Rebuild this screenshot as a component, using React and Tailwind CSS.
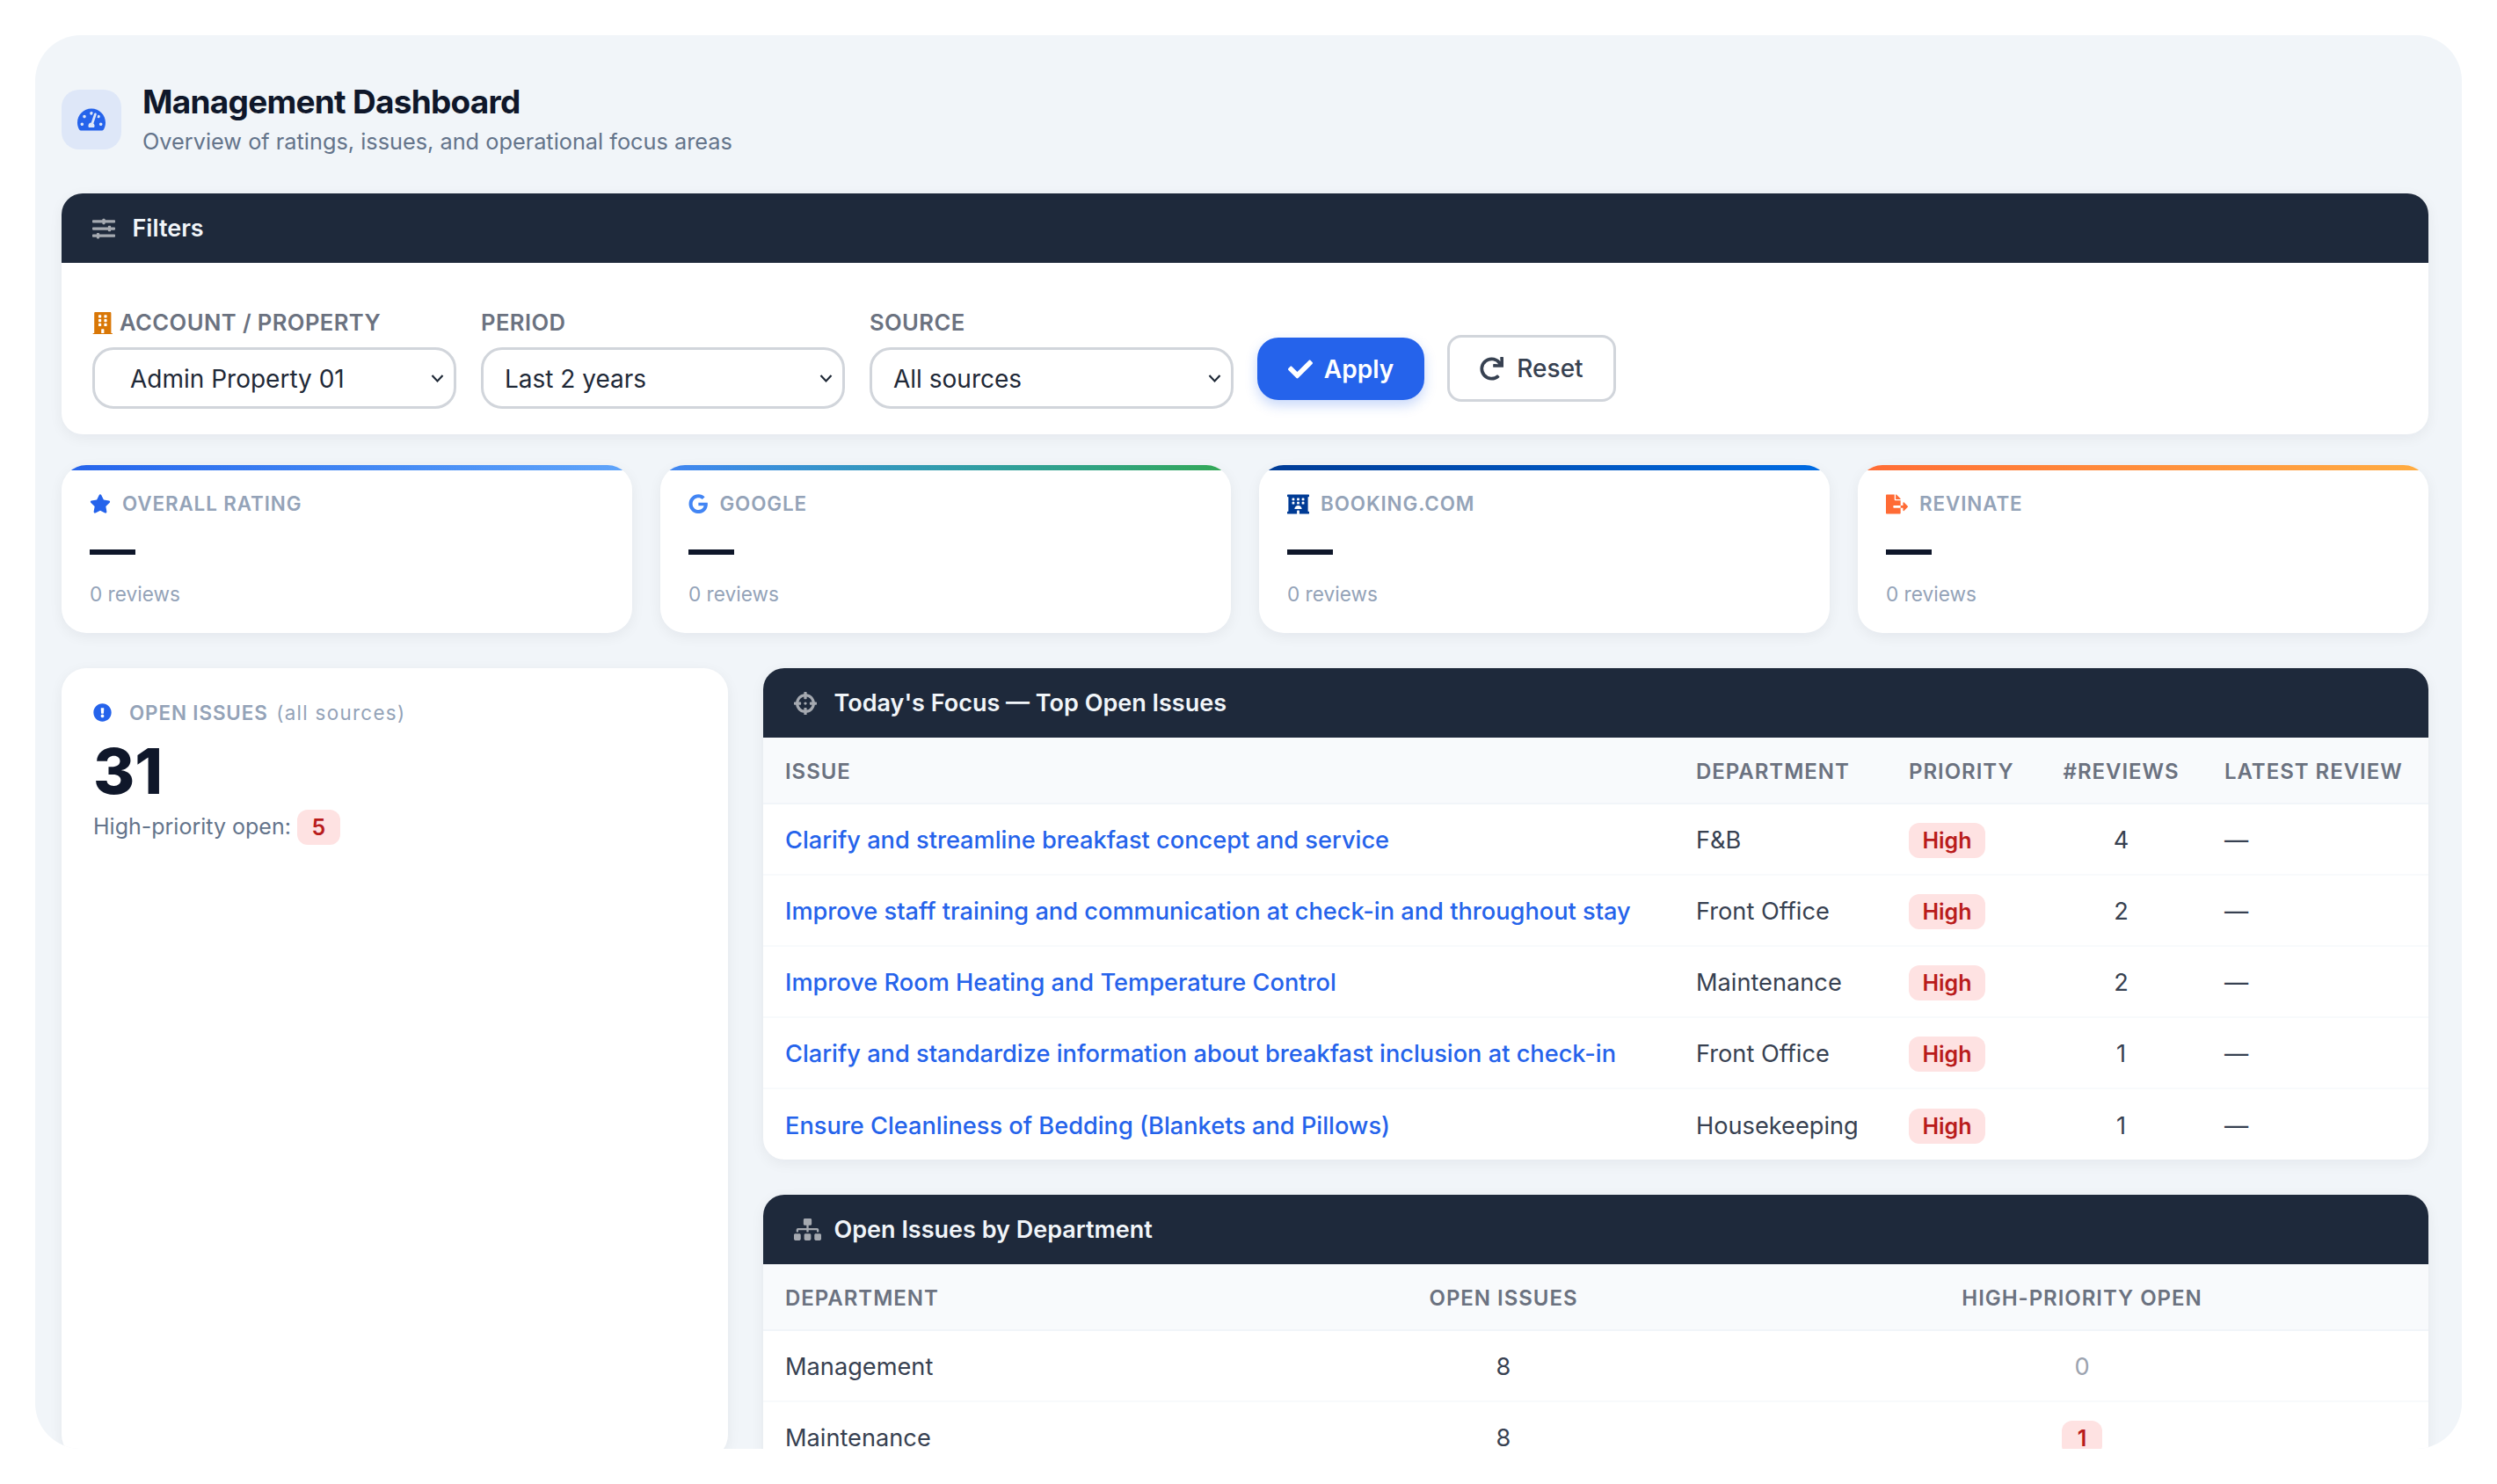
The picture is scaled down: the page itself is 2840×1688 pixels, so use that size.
import {
  FaBuilding,
  FaCheck,
  FaCrosshairs,
  FaExclamationCircle,
  FaFileExport,
  FaGoogle,
  FaHotel,
  FaRedo,
  FaSitemap,
  FaSlidersH,
  FaStar,
  FaTachometerAlt,
} from "react-icons/fa";

const stats = [
  { label: "Overall Rating", icon: FaStar, color: "text-[#2563eb] text-[24px]", bar: "from-[#2563eb] to-[#60a5fa]" },
  { label: "Google", icon: FaGoogle, color: "text-[#4285f4] text-[22.4px]", bar: "from-[#4285f4] to-[#34a853]" },
  { label: "Booking.com", icon: FaHotel, color: "text-[#003b95] text-[25px]", bar: "from-[#003b95] to-[#006ce4]" },
  { label: "Revinate", icon: FaFileExport, color: "text-[#ff6b35] text-[25px]", bar: "from-[#ff6b35] to-[#ffad42]" },
];

const topIssues = [
  { issue: "Clarify and streamline breakfast concept and service", dept: "F&B", reviews: 4 },
  { issue: "Improve staff training and communication at check-in and throughout stay", dept: "Front Office", reviews: 2 },
  { issue: "Improve Room Heating and Temperature Control", dept: "Maintenance", reviews: 2 },
  { issue: "Clarify and standardize information about breakfast inclusion at check-in", dept: "Front Office", reviews: 1 },
  { issue: "Ensure Cleanliness of Bedding (Blankets and Pillows)", dept: "Housekeeping", reviews: 1 },
];

function Chevron() {
  return (
    <svg viewBox="0 0 15 11" className="w-[15px] h-[11px] text-[#1f2937]" fill="none" stroke="currentColor" strokeWidth="2.2">
      <path d="M1.5 2 7.5 8.5 13.5 2" />
    </svg>
  );
}

function FakeSelect({ label, value, icon, indent }) {
  return (
    <div className="w-[414px]">
      <div className="h-[35px] mb-[10px] flex items-center gap-[7px] text-[25.6px] font-semibold tracking-[0.4px] text-[#6b7280]">
        {icon}
        {label}
      </div>
      <div className="h-[70px] flex items-center justify-between bg-white border-[3px] border-[#d1d5db] rounded-[24px] pr-[11px] text-[#1f2937] text-[28px]">
        <span className={`pt-[2px] ${indent}`}>{value}</span>
        <Chevron />
      </div>
    </div>
  );
}

function PanelHeader({ icon: Icon, title, iconClass = "text-[26px]" }) {
  return (
    <div className="h-[79px] bg-[#1e293b] flex items-center px-[32px] gap-[16px] text-[#f1f5f9] text-[27px] font-semibold">
      <span className="w-[32.5px] flex justify-center">
        <Icon className={`text-white/60 ${iconClass}`} />
      </span>
      <span className="pt-[2px]">{title}</span>
    </div>
  );
}

function HighBadge() {
  return (
    <span className="inline-block w-[87px] text-center leading-[40px] bg-[#fee2e2] text-[#b91c1c] rounded-[12px] text-[25px] font-semibold">
      High
    </span>
  );
}

export default function App() {
  return (
    <div className="h-[1688px] bg-white p-[40px] overflow-hidden font-['Inter',sans-serif]">
      <div className="h-[1608px] w-[2760px] bg-[#f1f5f9] rounded-[52px] overflow-hidden pl-[30px] pr-[38px] pt-[62px]">
        <div className="flex items-center gap-[24px] h-[68px]">
          <div className="w-[68px] h-[68px] bg-[#dee7f8] rounded-[20px] flex items-center justify-center">
            <FaTachometerAlt className="text-[#2563eb] text-[32px]" />
          </div>
          <div>
            <h1 className="text-[37px] leading-[44px] font-bold tracking-[-0.736px] text-[#0f172a]">Management Dashboard</h1>
            <p className="mt-[6px] text-[25.3px] leading-[34px] text-[#64748b]">Overview of ratings, issues, and operational focus areas</p>
          </div>
        </div>

        <section className="mt-[50px] bg-white rounded-[24px] overflow-hidden shadow-[0_4px_16px_rgba(15,23,42,0.06)]">
          <PanelHeader icon={FaSlidersH} title="Filters" />
          <div className="h-[195px] px-[35px] pt-[51px] flex items-start gap-[28px]">
            <FakeSelect
              label="ACCOUNT / PROPERTY"
              value="Admin Property 01"
              indent="pl-[40px]"
              icon={<FaBuilding className="-ml-[1.5px] text-[#d97706] text-[25.6px]" />}
            />
            <FakeSelect label="PERIOD" value="Last 2 years" indent="pl-[24px]" />
            <FakeSelect label="SOURCE" value="All sources" indent="pl-[24px]" />
            <button className="mt-[34px] -ml-[1px] w-[190px] h-[71px] bg-[#2563eb] text-white rounded-[24px] text-[28px] font-semibold flex items-center justify-center gap-[13px] shadow-[0_6px_14px_rgba(37,99,235,0.25)]">
              <FaCheck className="text-[28px]" />
              Apply
            </button>
            <button className="mt-[31px] -ml-[2px] w-[192px] h-[76px] bg-white text-[#374151] border-[3px] border-[#d1d5db] rounded-[16px] text-[28px] font-medium flex items-center justify-center gap-[15px]">
              <FaRedo className="text-[27px]" />
              Reset
            </button>
          </div>
        </section>

        <div className="mt-[35px] grid grid-cols-4 gap-[32px]">
          {stats.map((s) => (
            <div key={s.label} className="h-[191px] bg-white rounded-[28px] overflow-hidden shadow-[0_4px_16px_rgba(15,23,42,0.06)]">
              <div className={`h-[6px] bg-gradient-to-r ${s.bar}`} />
              <div className="pl-[32px] pt-[26px]">
                <div className="flex items-center h-[24px] gap-[13px] text-[22.4px] font-semibold uppercase tracking-[0.9px] text-[#94a3b8]">
                  <s.icon className={s.color} />
                  {s.label}
                </div>
                <div className="mt-[16px] h-[50px] text-[52px] leading-[50px] font-bold text-[#0f172a]">—</div>
                <div className="mt-[9px] text-[22.6px] leading-[32px] text-[#94a3b8]">0 reviews</div>
              </div>
            </div>
          ))}
        </div>

        <div className="mt-[40px] flex gap-[40px] items-start">
          <div className="w-[758px] h-[900px] shrink-0 bg-white rounded-[28px] shadow-[0_4px_16px_rgba(15,23,42,0.06)] px-[36px] pt-[34px]">
            <div className="flex items-center gap-[20px] text-[22.4px]">
              <FaExclamationCircle className="text-[#2563eb] text-[21px]" />
              <span className="font-semibold tracking-[0.9px] text-[#94a3b8]">
                OPEN ISSUES <span className="ml-[3px] font-normal tracking-[1.3px]">(all sources)</span>
              </span>
            </div>
            <div className="mt-[5px] text-[72px] leading-[88px] font-extrabold text-[#0f172a]">31</div>
            <div className="flex items-center gap-[7px] text-[25px] text-[#64748b]">
              High-priority open:
              <span className="w-[49px] leading-[40px] text-center bg-[#fee2e2] text-[#b91c1c] rounded-[12px] font-semibold">5</span>
            </div>
          </div>

          <div className="flex-1 min-w-0">
            <section className="bg-white rounded-[24px] overflow-hidden shadow-[0_4px_16px_rgba(15,23,42,0.06)]">
              <PanelHeader icon={FaCrosshairs} title="Today's Focus — Top Open Issues" />
              <table className="w-full table-fixed text-[27.2px] text-[#374151]">
                <colgroup>
                  <col className="w-[1036px]" />
                  <col className="w-[242px]" />
                  <col className="w-[174px]" />
                  <col className="w-[185px]" />
                  <col />
                </colgroup>
                <thead>
                  <tr className="h-[75px] bg-[#f8fafc] border-b-[2px] border-[#f1f5f9] text-[24px] font-semibold tracking-[0.96px] text-[#6b7280] [&>th]:pt-[3px]">
                    <th className="text-left pl-[25px] font-semibold">ISSUE</th>
                    <th className="text-left pl-[25px] font-semibold">DEPARTMENT</th>
                    <th className="text-left pl-[25px] font-semibold">PRIORITY</th>
                    <th className="text-center font-semibold">#REVIEWS</th>
                    <th className="text-left pl-[25px] font-semibold">LATEST REVIEW</th>
                  </tr>
                </thead>
                <tbody>
                  {topIssues.map((row) => (
                    <tr key={row.issue} className="h-[81px] border-b-[2px] border-[#f8fafc] last:border-b-0 [&>td]:pt-[4px]">
                      <td className="pl-[25px] font-medium text-[#2563eb] whitespace-nowrap">{row.issue}</td>
                      <td className="pl-[25px]">{row.dept}</td>
                      <td className="pl-[25px]"><HighBadge /></td>
                      <td className="text-center">{row.reviews}</td>
                      <td className="pl-[25px]">—</td>
                    </tr>
                  ))}
                </tbody>
              </table>
            </section>

            <section className="mt-[40px] bg-white rounded-[24px] overflow-hidden shadow-[0_4px_16px_rgba(15,23,42,0.06)]">
              <PanelHeader icon={FaSitemap} title="Open Issues by Department" iconClass="text-[31px] translate-x-[2px]" />
              <table className="w-full table-fixed text-[27.2px] text-[#374151]">
                <colgroup>
                  <col className="w-[578px]" />
                  <col className="w-[528px]" />
                  <col />
                </colgroup>
                <thead>
                  <tr className="h-[75px] bg-[#f8fafc] border-b-[2px] border-[#f1f5f9] text-[24px] font-semibold tracking-[0.96px] text-[#6b7280] [&>th]:pt-[3px]">
                    <th className="text-left pl-[25px] font-semibold">DEPARTMENT</th>
                    <th className="text-center font-semibold">OPEN ISSUES</th>
                    <th className="text-center font-semibold">HIGH-PRIORITY OPEN</th>
                  </tr>
                </thead>
                <tbody>
                  <tr className="h-[81px] border-b-[2px] border-[#f8fafc] [&>td]:pt-[4px]">
                    <td className="pl-[25px]">Management</td>
                    <td className="text-center">8</td>
                    <td className="text-center text-[#9ca3af]">0</td>
                  </tr>
                  <tr className="h-[81px] border-b-[2px] border-[#f8fafc] [&>td]:pt-[4px]">
                    <td className="pl-[25px]">Maintenance</td>
                    <td className="text-center">8</td>
                    <td className="text-center">
                      <span className="inline-block w-[46px] leading-[40px] bg-[#fee2e2] text-[#b91c1c] rounded-[12px] text-[25px] font-semibold">1</span>
                    </td>
                  </tr>
                </tbody>
              </table>
            </section>
          </div>
        </div>
      </div>
    </div>
  );
}
